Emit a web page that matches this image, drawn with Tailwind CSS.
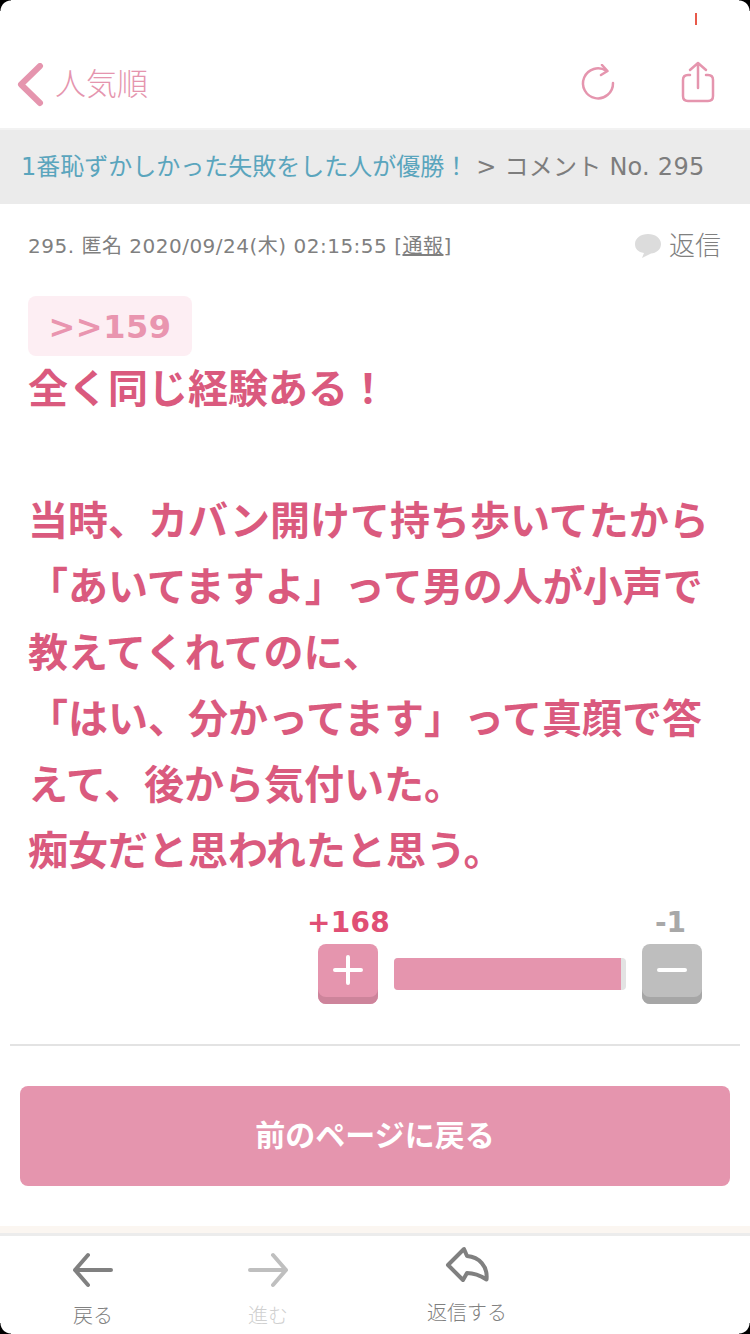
<!DOCTYPE html>
<html lang="ja">
<head>
<meta charset="utf-8">
<script src="https://cdn.jsdelivr.net/npm/@tailwindcss/browser@4"></script>
</head>
<body class="m-0 bg-white">
<div class="relative w-[750px] h-[1334px] overflow-hidden bg-white flex flex-col font-['DejaVu_Sans','Noto_Sans_CJK_JP',sans-serif]">
  <!-- status bar remnant -->
  <div class="h-[42px] shrink-0 relative">
    <div class="absolute left-[695px] top-[13px] w-[2px] h-[12px] bg-[#e8594a]"></div>
  </div>
  <!-- header -->
  <header class="h-[88px] shrink-0 flex items-center pl-[16px] border-b-[2px] border-[#f2f2f2]">
    <svg width="30" height="44" viewBox="0 0 30 44" fill="none" stroke="#e595ae" stroke-width="6" stroke-linecap="round" stroke-linejoin="round"><path d="M24 3 L5 21.500 L24 40" /></svg>
    <span class="ml-[9px] text-[31px] leading-none font-light text-[#e595ae] mt-[-2px]">人気順</span>
    <div class="ml-auto flex items-center">
      <svg class="mr-[65px] mt-[-4px]" width="36" height="38" viewBox="0 0 36 38" fill="none" stroke="#e595ae" stroke-width="2.500" stroke-linecap="round" stroke-linejoin="round"><path d="M33 19 A15 15 0 1 1 26.500 7" /><path d="M22 1 L27.500 7 L21 11" /></svg>
      <svg class="mr-[35px] mt-[-4px]" width="34" height="44" viewBox="0 0 34 44" fill="none" stroke="#e595ae" stroke-width="2.500" stroke-linecap="round" stroke-linejoin="round"><path d="M9 14 H7 Q2 14 2 19 V35 Q2 40 7 40 H27 Q32 40 32 35 V19 Q32 14 27 14 H25" /><path d="M17 2 V27 M9 9 L17 2 L25 9" /></svg>
    </div>
  </header>
  <!-- breadcrumb -->
  <nav class="h-[74px] shrink-0 bg-[#ebebeb] flex items-center pl-[21px] text-[24px] leading-none whitespace-nowrap">
    <span class="text-[#5aa5bd]">1番恥ずかしかった失敗をした人が優勝！</span>
    <span class="text-[#7d7d7d] ml-[8px] tracking-[0.25px]">&gt; コメント No. 295</span>
  </nav>
  <!-- meta -->
  <div class="h-[84px] shrink-0 flex items-center justify-between pl-[28px] pr-[29px]">
    <p class="text-[20px] leading-none text-[#808080] tracking-[0.5px]">295. 匿名 2020/09/24(木) 02:15:55 [<span class="underline">通報</span>]</p>
    <div class="flex items-center gap-[8px]">
      <svg width="26" height="24" viewBox="0 0 26 24" fill="#dcdcdc"><path d="M13 0 C20 0 26 4 26 10 C26 16 21 19 16 19.500 L7 24 L9 19 C3 18 0 15 0 10 C0 4 6 0 13 0 Z" /></svg>
      <span class="text-[26px] leading-none text-[#808080] font-light">返信</span>
    </div>
  </div>
  <!-- comment -->
  <main class="pl-[28px] pr-[28px]">
    <div class="mt-[8px] w-[164px] h-[60px] rounded-[8px] bg-[#fdeef3] flex items-center justify-center pt-[2px] text-[32px] leading-none font-bold tracking-[0.5px] text-[#e995af]">&gt;&gt;159</div>
    <p class="text-[40px] leading-[66px] font-bold text-[#da5a7e] whitespace-nowrap">全く同じ経験ある！<br><br>当時、カバン開けて持ち歩いてたから<br>「あいてますよ」って男の人が小声で<br>教えてくれてのに、<br>「はい、分かってます」って真顔で答<br>えて、後から気付いた。<br>痴女だと思われたと思う。</p>
  </main>
  <!-- votes -->
  <div class="h-[37px] mt-[23px] relative shrink-0">
    <span class="absolute left-[307px] top-[2px] text-[28px] leading-none font-bold tracking-[0.3px] text-[#e04f75]">+168</span>
    <span class="absolute left-[655px] top-[2px] text-[28px] leading-none font-bold text-[#a8a8a8]">-1</span>
  </div>
  <div class="flex items-center pl-[318px] shrink-0">
    <div class="w-[60px] h-[60px] rounded-[8px] bg-[#e595ae] shadow-[inset_0_-7px_0_#cd849b] flex items-center justify-center pb-[8px]">
      <svg width="30" height="30" viewBox="0 0 30 30" stroke="#fff" stroke-width="4" stroke-linecap="round"><path d="M15 2 V28 M2 15 H28" /></svg>
    </div>
    <div class="ml-[16px] w-[232px] h-[32px] rounded-[4px] bg-[#e3e3e3] overflow-hidden">
      <div class="h-full w-[227px] bg-[#e595ae]"></div>
    </div>
    <div class="ml-[16px] w-[60px] h-[60px] rounded-[8px] bg-[#bebebe] shadow-[inset_0_-7px_0_#a6a6a6] flex items-center justify-center pb-[8px]">
      <svg width="30" height="30" viewBox="0 0 30 30" stroke="#fff" stroke-width="4" stroke-linecap="round"><path d="M2 15 H28" /></svg>
    </div>
  </div>
  <div class="mt-[40px] mx-[10px] h-[2px] bg-[#e3e3e3] shrink-0"></div>
  <!-- button -->
  <div class="mt-[40px] mx-[20px] h-[100px] shrink-0 rounded-[8px] bg-[#e595ae] flex items-center justify-center text-[30px] leading-none font-bold text-white">前のページに戻る</div>
  <div class="mt-[40px] h-[7px] bg-[#fbf6f1] shrink-0"></div>
  <!-- toolbar -->
  <footer class="flex-1 border-t-[3px] border-[#ececec] bg-white relative">
    <div class="absolute left-[43px] top-0 w-[100px] flex flex-col items-center">
      <svg class="mt-[16px]" width="42" height="36" viewBox="0 0 42 36" fill="none" stroke="#808080" stroke-width="4" stroke-linecap="round" stroke-linejoin="round"><path d="M39 18 H3 M16 3 L3 18 L16 33" /></svg>
      <span class="mt-[18px] text-[20px] leading-none text-[#808080] font-light">戻る</span>
    </div>
    <div class="absolute left-[218px] top-0 w-[100px] flex flex-col items-center">
      <svg class="mt-[16px]" width="42" height="36" viewBox="0 0 42 36" fill="none" stroke="#bfbfbf" stroke-width="4" stroke-linecap="round" stroke-linejoin="round"><path d="M3 18 H39 M26 3 L39 18 L26 33" /></svg>
      <span class="mt-[18px] text-[20px] leading-none text-[#d0d0d0] font-light">進む</span>
    </div>
    <div class="absolute left-[407px] top-0 w-[120px] flex flex-col items-center">
      <svg class="mt-[10px]" width="44" height="38" viewBox="0 0 44 38" fill="none" stroke="#808080" stroke-width="4" stroke-linecap="round" stroke-linejoin="round"><path d="M19 3 L3 19 L18 34 L22 27 C28 27 33 28 41.500 33.500 C43 20 34 11 22 10 Z" /></svg>
      <span class="mt-[19px] text-[20px] leading-none text-[#808080] font-light">返信する</span>
    </div>
  </footer>
  <!-- corners -->
  <div class="absolute -left-[1px] -top-[1px] w-[12px] h-[12px] bg-[radial-gradient(circle_at_100%_100%,transparent_10px,#000_11px)]"></div>
  <div class="absolute -right-[1px] -top-[1px] w-[12px] h-[12px] bg-[radial-gradient(circle_at_0%_100%,transparent_10px,#000_11px)]"></div>
  <div class="absolute -left-[1px] -bottom-[1px] w-[12px] h-[12px] bg-[radial-gradient(circle_at_100%_0%,transparent_10px,#000_11px)]"></div>
  <div class="absolute -right-[1px] -bottom-[1px] w-[12px] h-[12px] bg-[radial-gradient(circle_at_0%_0%,transparent_10px,#000_11px)]"></div>
</div>
</body>
</html>
